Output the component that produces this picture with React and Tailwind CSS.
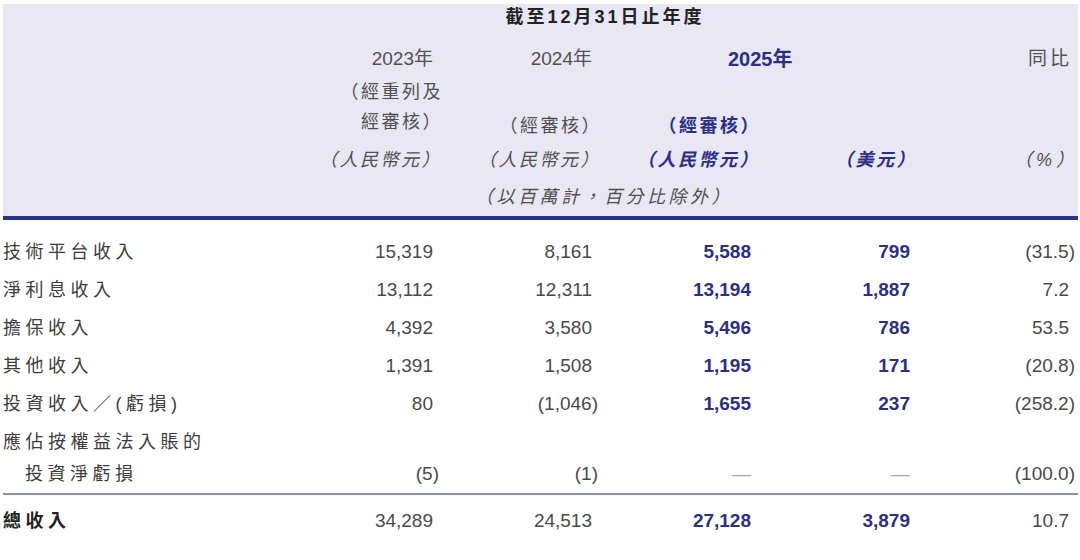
import React from "react";

const FONT = { fontFamily: '"Liberation Sans", "Noto Sans CJK TC", sans-serif' };

const rows = [
  { label: "技術平台收入", v: ["15,319", "8,161", "5,588", "799", "(31.5)"] },
  { label: "淨利息收入", v: ["13,112", "12,311", "13,194", "1,887", "7.2"] },
  { label: "擔保收入", v: ["4,392", "3,580", "5,496", "786", "53.5"] },
  { label: "其他收入", v: ["1,391", "1,508", "1,195", "171", "(20.8)"] },
  { label: "投資收入／(虧損)", v: ["80", "(1,046)", "1,655", "237", "(258.2)"] },
];

function Num({ t }) {
  if (t.endsWith(")")) {
    return (
      <span>
        {t.slice(0, -1)}
        <span className="-mr-[6px]">)</span>
      </span>
    );
  }
  return <span>{t}</span>;
}

function ValueCells({ v }) {
  return (
    <>
      <div className="text-right text-[#4a4a4a]"><Num t={v[0]} /></div>
      <div className="text-right text-[#4a4a4a]"><Num t={v[1]} /></div>
      <div className="text-right font-bold text-[#2b2f86]"><Num t={v[2]} /></div>
      <div className="text-right font-bold text-[#2b2f86]"><Num t={v[3]} /></div>
      <div className="text-right text-[#4a4a4a]"><Num t={v[4]} /></div>
    </>
  );
}

const GRID = "grid grid-cols-[271px_159px_159px_159px_159px_159px]";

export default function App() {
  return (
    <div className="w-[1080px] h-[560px] bg-white overflow-hidden" style={FONT}>
      <div className="ml-[3px] w-[1075px] pt-[4px]">
        {/* Header */}
        <div className="bg-[#e8e7f3] text-[#505050]">
          <div className={`${GRID} h-[26px] items-center`}>
            <div className="col-start-2 col-span-4 pl-[26px] text-center text-[18px] leading-[26px] font-bold tracking-[3px] text-[#222]">
              截至12月31日止年度
            </div>
          </div>
          <div className={`${GRID} h-[47px] pt-[10px] text-[19px] leading-[38px]`}>
            <div className="col-start-2 text-right">2023年</div>
            <div className="text-right">2024年</div>
            <div className="col-span-2 pl-[136px] text-[20px] font-bold text-[#2b2f86]">2025年</div>
            <div className="text-right tracking-[3px] -mr-[3px]">同比</div>
          </div>
          <div className={`${GRID} h-[64px] text-[18px] leading-[30px] tracking-[2.5px]`}>
            <div className="col-start-2 text-right -mr-[10px]">
              <div>（經重列及</div>
              <div>經審核）</div>
            </div>
            <div className="flex flex-col justify-end text-right -mr-[10px]">
              <div>（經審核）</div>
            </div>
            <div className="flex flex-col justify-end text-right font-bold text-[#2b2f86] -mr-[10px]">
              <div>（經審核）</div>
            </div>
          </div>
          <div className={`${GRID} h-[38px] items-center text-[18px] leading-[38px] tracking-[2.5px] italic`}>
            <div className="col-start-2 text-right -mr-[9px]">（人民幣元）</div>
            <div className="text-right -mr-[9px]">（人民幣元）</div>
            <div className="text-right font-bold text-[#2b2f86] -mr-[9px]">（人民幣元）</div>
            <div className="text-right font-bold text-[#2b2f86] -mr-[7px]">（美元）</div>
            <div className="text-right -mr-[9px] tracking-[4px]">（%）</div>
          </div>
          <div className={`${GRID} h-[37px] text-[18px] leading-[36px] tracking-[3.5px] italic`}>
            <div className="col-start-2 col-span-4 pl-[24px] text-center">（以百萬計，百分比除外）</div>
          </div>
        </div>
        <div className="h-[4px] bg-[#2d3388]" />

        {/* Body */}
        <div className="pt-[13px] text-[19px]">
          {rows.map((r) => (
            <div key={r.label} className={`${GRID} h-[38px] items-center leading-[38px]`}>
              <div className="text-[18px] tracking-[4.5px] text-[#3c3c3c]">{r.label}</div>
              <ValueCells v={r.v} />
            </div>
          ))}
          <div className={`${GRID} h-[70px] pt-[3px] leading-[32px]`}>
            <div className="text-[18px] tracking-[4.5px] text-[#3c3c3c]">
              <div>應佔按權益法入賬的</div>
              <div className="pl-[22px]">投資淨虧損</div>
            </div>
            <div className="flex flex-col justify-start pt-[32px] text-right text-[#4a4a4a]"><div><Num t="(5)" /></div></div>
            <div className="flex flex-col justify-start pt-[32px] text-right text-[#4a4a4a]"><div><Num t="(1)" /></div></div>
            <div className="flex flex-col justify-start pt-[32px] text-right text-[#a3a6c8]"><div>—</div></div>
            <div className="flex flex-col justify-start pt-[32px] text-right text-[#a3a6c8]"><div>—</div></div>
            <div className="flex flex-col justify-start pt-[32px] text-right text-[#4a4a4a]"><div><Num t="(100.0)" /></div></div>
          </div>
        </div>
        <div className="h-[2px] bg-[#8a8fc3]" />
        <div className="pt-[7px] text-[19px]">
          <div className={`${GRID} h-[38px] items-center leading-[38px]`}>
            <div className="text-[18px] font-bold tracking-[4.5px] text-[#222]">總收入</div>
            <ValueCells v={["34,289", "24,513", "27,128", "3,879", "10.7"]} />
          </div>
        </div>
      </div>
    </div>
  );
}
